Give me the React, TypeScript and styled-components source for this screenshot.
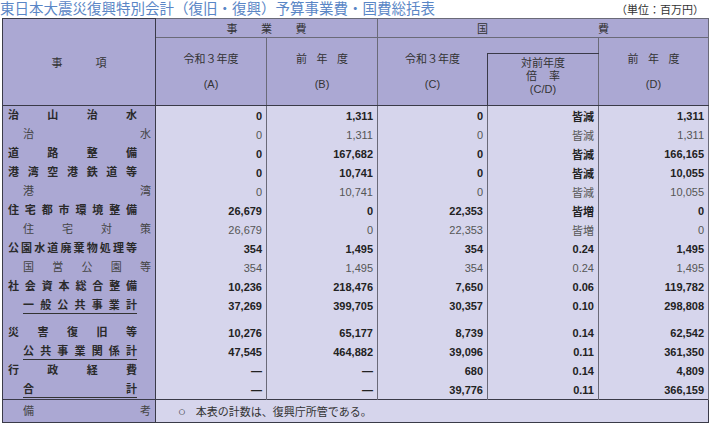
import React from 'react';
import styled, { createGlobalStyle } from 'styled-components';

const Global = createGlobalStyle`
  body { margin: 0; background: #fff; font-family: "Liberation Sans", "Noto Sans CJK JP", sans-serif; }
`;

type Kind = 'main' | 'sub' | 'total';
interface Row { label: string; kind: Kind; v: string[]; gap?: boolean }

const rows: Row[] = [
  { label: '治山治水', kind: 'main', v: ['0', '1,311', '0', '皆減', '1,311'] },
  { label: '治水', kind: 'sub', v: ['0', '1,311', '0', '皆減', '1,311'] },
  { label: '道路整備', kind: 'main', v: ['0', '167,682', '0', '皆減', '166,165'] },
  { label: '港湾空港鉄道等', kind: 'main', v: ['0', '10,741', '0', '皆減', '10,055'] },
  { label: '港湾', kind: 'sub', v: ['0', '10,741', '0', '皆減', '10,055'] },
  { label: '住宅都市環境整備', kind: 'main', v: ['26,679', '0', '22,353', '皆増', '0'] },
  { label: '住宅対策', kind: 'sub', v: ['26,679', '0', '22,353', '皆増', '0'] },
  { label: '公園水道廃棄物処理等', kind: 'main', v: ['354', '1,495', '354', '0.24', '1,495'] },
  { label: '国営公園等', kind: 'sub', v: ['354', '1,495', '354', '0.24', '1,495'] },
  { label: '社会資本総合整備', kind: 'main', v: ['10,236', '218,476', '7,650', '0.06', '119,782'] },
  { label: '一般公共事業計', kind: 'total', v: ['37,269', '399,705', '30,357', '0.10', '298,808'] },
  { label: '災害復旧等', kind: 'main', gap: true, v: ['10,276', '65,177', '8,739', '0.14', '62,542'] },
  { label: '公共事業関係計', kind: 'total', v: ['47,545', '464,882', '39,096', '0.11', '361,350'] },
  { label: '行政経費', kind: 'main', v: ['—', '—', '680', '0.14', '4,809'] },
  { label: '合計', kind: 'total', v: ['—', '—', '39,776', '0.11', '366,159'] },
];

const DARK = '#3a3a48';
const MID = '#6a6a78';

export default function App() {
  return (
    <Page>
      <Global />
      <TitleBar>
        <Title>東日本大震災復興特別会計（復旧・復興）予算事業費・国費総括表</Title>
        <Unit>（単位：百万円）</Unit>
      </TitleBar>
      <Table>
        <colgroup>
          <col style={{ width: 153 }} />
          <col style={{ width: 111 }} />
          <col style={{ width: 111 }} />
          <col style={{ width: 110 }} />
          <col style={{ width: 111 }} />
          <col style={{ width: 110 }} />
        </colgroup>
        <thead>
          <tr>
            <CornerTh rowSpan={3}>
              <Spread style={{ width: 55, margin: '0 auto' }}>事項</Spread>
            </CornerTh>
            <GroupTh colSpan={2}><Spread style={{ width: 80, margin: '0 auto' }}>事業費</Spread></GroupTh>
            <GroupTh colSpan={3}><Spread style={{ width: 132, margin: '0 auto' }}>国費</Spread></GroupTh>
          </tr>
          <tr>
            <Th rowSpan={2}><HeadStack><span>令和３年度</span><span>(A)</span></HeadStack></Th>
            <Th rowSpan={2}><HeadStack><Spread style={{ width: 52 }}>前年度</Spread><span>(B)</span></HeadStack></Th>
            <Th rowSpan={2} $noRight><HeadStack><span>令和３年度</span><span>(C)</span></HeadStack></Th>
            <BlankTh />
            <Th rowSpan={2}><HeadStack><Spread style={{ width: 52 }}>前年度</Spread><span>(D)</span></HeadStack></Th>
          </tr>
          <tr>
            <RatioTh>
              <div>対前年度</div>
              <Spread style={{ width: 34, margin: '0 auto' }}>倍率</Spread>
              <div>(C/D)</div>
            </RatioTh>
          </tr>
        </thead>
        <tbody>
          {rows.map((r) => (
            <React.Fragment key={r.label}>
              {r.gap && (
                <GapRow>
                  <LabelCell />
                  {[0, 1, 2, 3, 4].map((i) => <NumCell key={i} $kind="main" />)}
                </GapRow>
              )}
              <tr>
                <LabelCell>
                  <Label $kind={r.kind}>{r.label}</Label>
                </LabelCell>
                {r.v.map((x, i) => (
                  <NumCell key={i} $kind={r.kind}>{x}</NumCell>
                ))}
              </tr>
            </React.Fragment>
          ))}
          <tr>
            <NoteLabel><Label $kind="sub">備考</Label></NoteLabel>
            <NoteCell colSpan={5}><Circle>○</Circle>本表の計数は、復興庁所管である。</NoteCell>
          </tr>
        </tbody>
      </Table>
    </Page>
  );
}

const Page = styled.div`
  width: 710px;
  padding: 0 2px;
  box-sizing: border-box;
`;

const TitleBar = styled.div`
  display: flex;
  justify-content: space-between;
  align-items: flex-end;
  height: 18px;
`;

const Title = styled.div`
  font-size: 14.5px;
  color: #5a86c6;
  line-height: 17px;
  margin-left: -2px;
`;

const Unit = styled.div`
  font-size: 11px;
  color: #333;
  line-height: 16px;
  margin-right: 4px;
`;

const Table = styled.table`
  border-collapse: collapse;
  table-layout: fixed;
  width: 706px;
  border: 1.5px solid ${DARK};
  font-size: 11px;
  color: #222;
`;

const Th = styled.th<{ $noRight?: boolean }>`
  background: #aba8d3;
  font-weight: normal;
  font-size: 11px;
  color: #333;
  border: 1px solid ${MID};
  border-right: ${(p) => (p.$noRight ? 'none' : `1px solid ${MID}`)};
  border-bottom: 1.5px solid ${DARK};
  padding: 0;
  vertical-align: top;
`;

const CornerTh = styled.th`
  background: #aba8d3;
  font-weight: normal;
  font-size: 11px;
  color: #333;
  border-right: 1.5px solid ${DARK};
  border-bottom: 1.5px solid ${DARK};
  padding: 0;
  vertical-align: middle;
`;

const GroupTh = styled.th`
  background: #aba8d3;
  font-weight: normal;
  font-size: 11px;
  color: #333;
  height: 18px;
  border: 1px solid ${MID};
  padding: 0;
`;

const BlankTh = styled.th`
  background: #aba8d3;
  height: 15px;
  padding: 0;
  border-left: none;
  border-bottom: 1.5px solid ${DARK};
`;

const RatioTh = styled.th`
  background: #aba8d3;
  font-weight: normal;
  font-size: 11px;
  line-height: 13px;
  color: #333;
  height: 48px;
  padding: 3px 0 0;
  vertical-align: top;
  border-left: 1.5px solid ${DARK};
  border-right: 1px solid ${MID};
  border-bottom: 1.5px solid ${DARK};
`;

const HeadStack = styled.div`
  display: flex;
  flex-direction: column;
  align-items: center;
  gap: 11px;
  padding-top: 14px;
  line-height: 14px;
`;

const Spread = styled.div`
  text-align: justify;
  text-align-last: justify;
`;

const LabelCell = styled.td`
  background: #aba8d3;
  border-right: 1.5px solid ${DARK};
  padding: 0;
  height: 19px;
`;

const GapRow = styled.tr`
  td { height: 8px; }
`;

const Label = styled.div<{ $kind: Kind }>`
  text-align: justify;
  text-align-last: justify;
  font-weight: ${(p) => (p.$kind === 'sub' ? 'normal' : 'bold')};
  color: ${(p) => (p.$kind === 'sub' ? '#444' : '#2a2a2a')};
  margin: ${(p) =>
    p.$kind === 'sub' ? '0 4px 0 20px' : p.$kind === 'total' ? '0 18px 0 20px' : '0 18px 0 5px'};
  border-bottom: ${(p) => (p.$kind === 'total' ? '1.5px solid #333' : 'none')};
  line-height: 15px;
`;

const NumCell = styled.td<{ $kind: Kind }>`
  background: #d6d5ec;
  border-left: 1px solid ${MID};
  border-right: 1px solid ${MID};
  text-align: right;
  padding: 0 4px;
  height: 19px;
  font-weight: ${(p) => (p.$kind === 'sub' ? 'normal' : 'bold')};
  color: ${(p) => (p.$kind === 'sub' ? '#555' : '#222')};
`;

const NoteLabel = styled.td`
  background: #aba8d3;
  border-top: 1.5px solid ${DARK};
  border-right: 1.5px solid ${DARK};
  padding: 0;
  height: 22px;
`;

const NoteCell = styled.td`
  background: #d6d5ec;
  border-top: 1.5px solid ${DARK};
  padding: 0 0 0 22px;
  color: #333;
`;

const Circle = styled.span`
  font-size: 13px;
  margin-right: 10px;
`;
